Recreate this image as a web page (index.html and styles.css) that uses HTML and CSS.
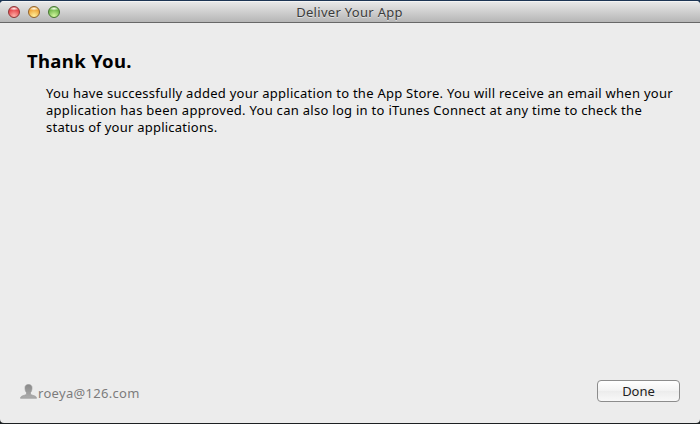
FILE: index.html
```html
<!DOCTYPE html>
<html lang="en">
<head>
<meta charset="utf-8">
<title>Deliver Your App</title>
<link rel="stylesheet" href="styles.css">
</head>
<body>
<div class="window">
  <header class="titlebar">
    <div class="lights">
      <span class="light red"></span>
      <span class="light yellow"></span>
      <span class="light green"></span>
    </div>
    <span class="title">Deliver Your App</span>
  </header>
  <main class="content">
    <h1>Thank You.</h1>
    <p><span class="l1">You have successfully added your application to the App Store. You will receive an email when your</span><br>
    <span class="l2">application has been approved. You can also log in to iTunes Connect at any time to check the</span><br>
    <span class="l3">status of your applications.</span></p>
  </main>
  <footer class="footer">
    <div class="account">
      <svg class="user" width="17" height="15" viewBox="0 0 17 15">
        <defs><linearGradient id="g" x1="0" y1="0" x2="0" y2="1"><stop offset="0" stop-color="#898989"/><stop offset="1" stop-color="#adadad"/></linearGradient></defs>
        <path fill="url(#g)" stroke="#929292" stroke-width=".6" d="M8.5.5C6.200.5 4.900 1.800 5 4c.1 1.800.5 3.500 1.500 4.600v1.300c-.3.800-1.300 1.100-2.700 1.500C1.800 11.900.6 12.500.5 14.300h16c-.1-1.800-1.300-2.400-3.300-2.900-1.400-.4-2.400-.7-2.700-1.500V8.600C11.500 7.500 11.900 5.800 12 4 12.100 1.800 10.800.5 8.500.5z"/>
      </svg>
      <span class="email">roeya@126.com</span>
    </div>
    <button class="done"><span>Done</span></button>
  </footer>
</div>
</body>
</html>
```
FILE: styles.css
```css
* { box-sizing: border-box; }
body {
  margin: 0;
  height: 424px;
  padding: 1px 0;
  overflow: hidden;
  background: linear-gradient(#1d3554 0 50%, #1c2022 50%);
  font-family: "Lucida Grande", "Noto Sans", sans-serif;
  font-size: 13px;
  color: #000;
}
.window {
  height: 422px;
  display: flex;
  flex-direction: column;
  background: #ececec;
  border-radius: 4px;
  overflow: hidden;
}
.titlebar {
  position: relative;
  flex: none;
  height: 22px;
  display: flex;
  align-items: center;
  justify-content: center;
  background: linear-gradient(#e8e8e8, #b6b6b6);
  border-top: 1px solid #f4f4f4;
  border-bottom: 1px solid #686868;
}
.lights {
  position: absolute;
  left: 8px;
  top: 4px;
  display: flex;
  gap: 8px;
}
.light {
  width: 12px;
  height: 12px;
  border-radius: 50%;
  border: 1px solid;
}
.red { border-color: #8c3434; background: radial-gradient(ellipse 5px 2px at 50% 16%, #fff3f3, #fff0 100%), radial-gradient(circle at 50% 90%, #ffb0a8, #e6484c 65%); }
.yellow { border-color: #92622a; background: radial-gradient(ellipse 5px 2px at 50% 16%, #fffbee, #fff0 100%), radial-gradient(circle at 50% 90%, #fff09c, #f0a83c 65%); }
.green { border-color: #457530; background: radial-gradient(ellipse 5px 2px at 50% 16%, #f6fff0, #fff0 100%), radial-gradient(circle at 50% 90%, #d4f8a0, #74b84e 65%); }
.title { margin-right: 1px; color: #3c3c3c; line-height: 18px; letter-spacing: .3px; text-shadow: 0 1px #e0e0e0; }
.content { flex: 1; padding: 26px 20px 0 27px; }
h1 { margin: 0; font-size: 18.5px; line-height: 24px; letter-spacing: .33px; }
p { margin: 12px 0 0 19px; line-height: 17px; white-space: nowrap; }
.l1 { letter-spacing: .26px; }
.l2 { letter-spacing: .285px; }
.l3 { letter-spacing: .24px; }
.footer {
  display: flex;
  justify-content: space-between;
  align-items: flex-start;
  height: 44px;
  padding: 0 20px;
}
.account { display: flex; align-items: center; gap: 1px; margin-top: 5px; color: #7c7c7c; }
.user { display: block; margin-top: -3px; }
.email { line-height: 18px; letter-spacing: .3px; }
.done {
  width: 83px;
  height: 22px;
  margin: 1px 0 0;
  padding: 0;
  border: 1px solid #8c8c8c;
  border-radius: 4px;
  background: linear-gradient(#fff, #f2f2f2 50%, #ececec 51%, #f8f8f8);
  font: inherit;
  line-height: 18px;
  color: #222;
}
```
